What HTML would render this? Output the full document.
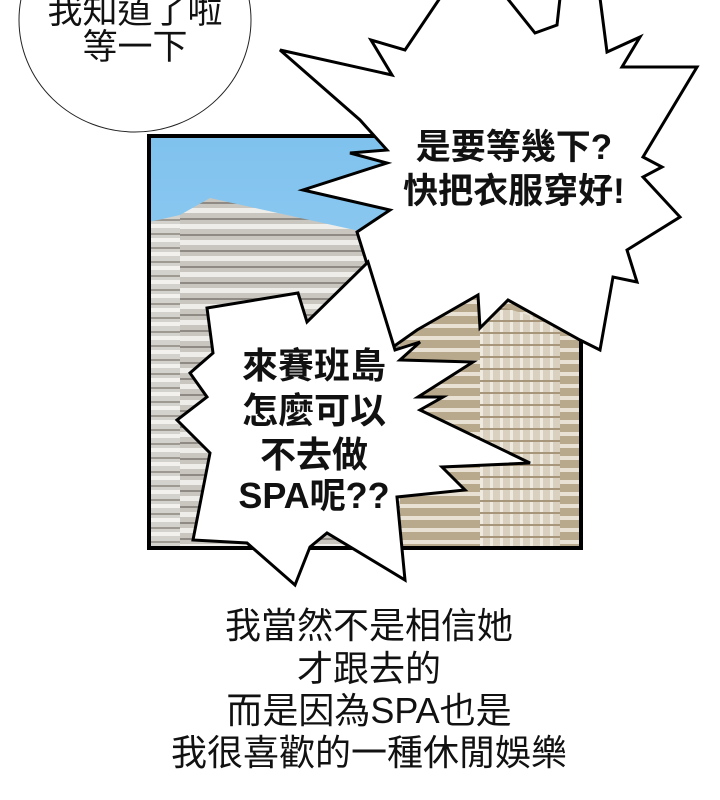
<!DOCTYPE html>
<html><head><meta charset="utf-8"><style>
html,body{margin:0;padding:0;background:#fff;width:720px;height:800px;overflow:hidden}
svg{display:block}
.t{font-family:"Liberation Sans","Noto Sans CJK TC",sans-serif;}
</style></head><body>
<svg width="720" height="800" viewBox="0 0 720 800" xmlns="http://www.w3.org/2000/svg">
<defs>
<linearGradient id="sky" x1="0" y1="0" x2="0" y2="1"><stop offset="0" stop-color="#7fc2ee"/><stop offset="1" stop-color="#a9d7f4"/></linearGradient>
<pattern id="bA" width="20" height="14" patternUnits="userSpaceOnUse"><rect width="20" height="14" fill="#d4d2cc"/><rect y="0" width="20" height="4" fill="#f2f1ee"/><rect y="9" width="20" height="2" fill="#9e9a92"/></pattern>
<pattern id="bB" width="20" height="16" patternUnits="userSpaceOnUse"><rect width="20" height="16" fill="#c9c6c0"/><rect y="0" width="20" height="5" fill="#eeedea"/><rect y="10" width="20" height="2" fill="#8f8b84"/></pattern>
<pattern id="bC" width="10" height="12" patternUnits="userSpaceOnUse"><rect width="10" height="12" fill="#d9d0bf"/><rect x="0" width="3" height="12" fill="#efeae0"/><rect y="8" width="10" height="2" fill="#a8967a"/></pattern>
<pattern id="bD" width="20" height="12" patternUnits="userSpaceOnUse"><rect width="20" height="12" fill="#b8a88c"/><rect y="0" width="20" height="4" fill="#e8e1d4"/></pattern>
</defs>
<rect x="149" y="136" width="432" height="412" fill="url(#sky)"/>
<polygon points="149,222 180,215 180,548 149,548" fill="url(#bA)"/>
<polygon points="180,215 210,198 400,240 400,548 180,548" fill="url(#bB)"/>
<polygon points="400,320 480,290 581,330 581,548 400,548" fill="url(#bD)"/>
<polygon points="480,300 560,325 560,548 480,548" fill="url(#bC)"/>
<rect x="149" y="136" width="432" height="412" fill="none" stroke="#000" stroke-width="4"/>
<ellipse cx="135" cy="20" rx="116" ry="112" fill="#fff" stroke="#222" stroke-width="1"/>
<text class="t" x="135" y="23" font-size="35" text-anchor="middle" fill="#111">我知道了啦</text>
<text class="t" x="135" y="59" font-size="35" text-anchor="middle" fill="#111">等一下</text>
<polygon points="280,50 392,75 371,40 405,50 440,-2 507,-2 535,33 557,25 560,-2 600,-2 607,52 640,37 622,67 697,67 643,157 662,167 643,177 680,217 627,250 637,282 613,277 600,350 580,340 508,300 480,328 478,295 417,330 393,347 357,232 390,210 303,190 387,163 350,153 387,150 360,120" fill="#fff" stroke="#000" stroke-width="3" stroke-linejoin="miter"/>
<text class="t" x="514" y="159" font-size="35" font-weight="bold" text-anchor="middle" fill="#111">是要等幾下?</text>
<text class="t" x="514" y="203" font-size="35" font-weight="bold" text-anchor="middle" fill="#111">快把衣服穿好!</text>
<polygon points="207,308 298,293 307,322 368,262 395,350 420,342 400,360 473,362 418,397 443,397 420,410 530,463 442,467 465,490 397,497 405,580 327,533 310,547 295,585 247,543 193,540 210,453 177,420 207,397 190,373 213,353" fill="#fff" stroke="#000" stroke-width="3"/>
<g class="t" font-size="36" font-weight="bold" text-anchor="middle" fill="#111">
<text x="314" y="378">來賽班島</text>
<text x="314" y="423">怎麼可以</text>
<text x="314" y="467">不去做</text>
<text x="314" y="508">SPA呢??</text>
</g>
<g class="t" font-size="36" text-anchor="middle" fill="#111">
<text x="369" y="638">我當然不是相信她</text>
<text x="369" y="681">才跟去的</text>
<text x="369" y="723">而是因為SPA也是</text>
<text x="369" y="765">我很喜歡的一種休閒娛樂</text>
</g>
</svg>
</body></html>
